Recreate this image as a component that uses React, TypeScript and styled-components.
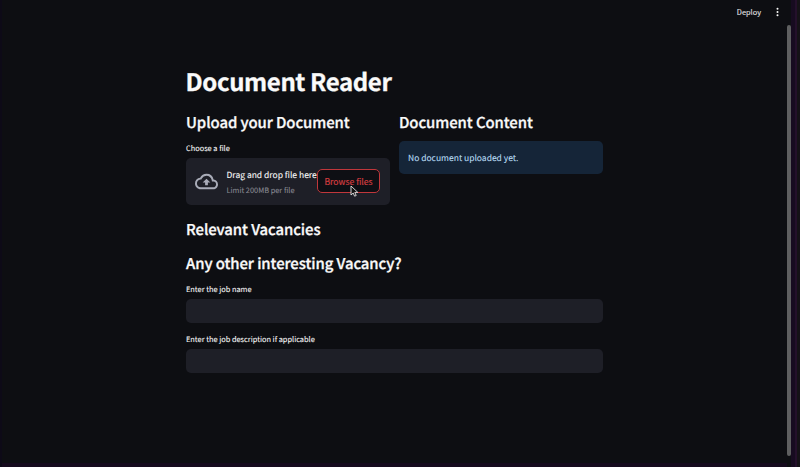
import React from "react";
import styled, { createGlobalStyle } from "styled-components";

const GlobalStyle = createGlobalStyle`
  * { box-sizing: border-box; }
  body {
    margin: 0;
    background: #0d0e12;
    color: #fafafa;
    font-family: "Noto Sans CJK SC", "Noto Sans", sans-serif;
    text-rendering: geometricPrecision;
    -webkit-text-stroke: 0.08px currentColor;
    overflow: hidden;
  }
`;

const Window = styled.div`
  display: grid;
  grid-template-columns: 1fr 4px 9px;
  height: 467px;
  background: #0d0e12;
  border-left: 2px solid #0d0a17;
`;

const Page = styled.div`
  display: flex;
  flex-direction: column;
  border-bottom: 4px solid #150a1d;
`;

const Toolbar = styled.header`
  display: flex;
  align-items: center;
  justify-content: flex-end;
  gap: 14px;
  height: 24px;
  padding-right: 7px;
`;

const DeployButton = styled.button`
  border: 0;
  padding: 0;
  background: none;
  color: #e6e6e8;
  font: 400 7.4px/12px "Noto Sans CJK SC", sans-serif;
`;

const MenuIcon = styled.svg`
  width: 5px;
  height: 10px;
  fill: #fafafa;
`;

const Main = styled.main`
  width: 417px;
  margin: 41px 0 0 184px;
`;

const Title = styled.h1`
  margin: 0;
  height: 35px;
  font-size: 24px;
  line-height: 32px;
  font-weight: 700;
  letter-spacing: -0.4px;
  text-indent: -0.4px;
  white-space: nowrap;
  -webkit-text-stroke-width: 0.3px;
`;

const Heading = styled.h2<{ $height?: number }>`
  margin: 0;
  height: ${(p) => p.$height ?? 34}px;
  font-size: 14.9px;
  line-height: 24px;
  font-weight: 500;
  letter-spacing: -0.07px;
  white-space: nowrap;
  -webkit-text-stroke-width: 0.3px;
`;

const Columns = styled.div`
  display: grid;
  grid-template-columns: 204px 204px;
  gap: 9px;
  margin-top: 11px;
  height: 107px;
`;

const Label = styled.label`
  display: block;
  height: 16px;
  font-size: 7.4px;
  line-height: 14px;
  white-space: nowrap;
`;

const Dropzone = styled.section`
  display: flex;
  align-items: center;
  height: 47px;
  padding: 0 10px 0 9px;
  border-radius: 5px;
  background: #1e1f27;
`;

const CloudIcon = styled.svg`
  flex: none;
  width: 23px;
  height: 23px;
  margin-right: 8.5px;
  fill: #a9acb8;
`;

const DropText = styled.div`
  flex: 1;
  min-width: 0;
  padding-top: 2px;
  white-space: nowrap;
`;

const DropTitle = styled.div`
  font-size: 8.5px;
  line-height: 15px;
`;

const DropHint = styled.div`
  font-size: 7.4px;
  line-height: 15px;
  color: #888991;
`;

const BrowseButton = styled.button`
  position: relative;
  flex: none;
  width: 63px;
  height: 24px;
  margin-top: -1px;
  padding: 0;
  border: 1px solid #c0373b;
  border-radius: 5px;
  background: #0e0f14;
  color: #cd3b3f;
  font: 400 8.6px/20px "Noto Sans CJK SC", sans-serif;
  -webkit-text-stroke: 0.2px currentColor;
  white-space: nowrap;
`;

const Cursor = styled.svg`
  position: absolute;
  left: 32px;
  top: 15px;
  width: 9px;
  height: 12px;
`;

const Notice = styled.div`
  height: 33px;
  margin-top: -4px;
  padding-left: 9px;
  border-radius: 5px;
  background: #152538;
  color: #b9ddf5;
  font-size: 8.5px;
  line-height: 35px;
`;

const Field = styled.div`
  height: 50px;
`;

const TextInput = styled.input`
  display: block;
  width: 100%;
  height: 24px;
  border: 0;
  border-radius: 5px;
  background: #1e1f27;
  color: #fafafa;
  outline: none;
`;

const ScrollTrack = styled.div`
  padding-top: 25px;
  height: 456px;
`;

const ScrollThumb = styled.div`
  height: 431px;
  border-radius: 2px;
  background: #5e5f60;
`;

const Edge = styled.div`
  border-left: 4px solid #170b20;
  border-right: 3px solid #151217;
  background: #24102b;
`;

export default function App() {
  return (
    <>
      <GlobalStyle />
      <Window>
        <Page>
          <Toolbar>
            <DeployButton>Deploy</DeployButton>
            <MenuIcon viewBox="0 0 5 10" aria-label="Menu">
              <circle cx="2.5" cy="1.7" r="1" />
              <circle cx="2.5" cy="5" r="1" />
              <circle cx="2.5" cy="8.3" r="1" />
            </MenuIcon>
          </Toolbar>
          <Main>
            <Title>Document Reader</Title>
            <Columns>
              <div>
                <Heading $height={31}>Upload your Document</Heading>
                <Label>Choose a file</Label>
                <Dropzone>
                  <CloudIcon viewBox="0 0 24 24">
                    <path d="M19.35 10.04A7.49 7.49 0 0 0 12 4C9.11 4 6.6 5.64 5.35 8.04A5.994 5.994 0 0 0 0 14c0 3.31 2.69 6 6 6h13c2.76 0 5-2.24 5-5 0-2.64-2.05-4.78-4.65-4.96zM19 18H6c-2.21 0-4-1.79-4-4 0-2.05 1.53-3.76 3.56-3.97l1.07-.11.5-.95A5.469 5.469 0 0 1 12 6c2.62 0 4.88 1.86 5.39 4.43l.3 1.5 1.53.11A2.98 2.98 0 0 1 22 15c0 1.65-1.35 3-3 3zM8 13h2.55v3h2.9v-3H16l-4-4-4 4z" />
                  </CloudIcon>
                  <DropText>
                    <DropTitle>Drag and drop file here</DropTitle>
                    <DropHint>Limit 200MB per file</DropHint>
                  </DropText>
                  <BrowseButton>
                    Browse files
                    <Cursor viewBox="0 0 9 12">
                      <path d="M1 1v9l2.2-2 1.4 3.2 1.6-.7-1.4-3.1h3z" fill="#111" stroke="#e4e4e4" strokeWidth=".9" />
                    </Cursor>
                  </BrowseButton>
                </Dropzone>
              </div>
              <div>
                <Heading>Document Content</Heading>
                <Notice>No document uploaded yet.</Notice>
              </div>
            </Columns>
            <Heading>Relevant Vacancies</Heading>
            <Heading $height={31}>Any other interesting Vacancy?</Heading>
            <Field>
              <Label htmlFor="job-name">Enter the job name</Label>
              <TextInput id="job-name" />
            </Field>
            <Field>
              <Label htmlFor="job-description">Enter the job description if applicable</Label>
              <TextInput id="job-description" />
            </Field>
          </Main>
        </Page>
        <ScrollTrack>
          <ScrollThumb />
        </ScrollTrack>
        <Edge />
      </Window>
    </>
  );
}
